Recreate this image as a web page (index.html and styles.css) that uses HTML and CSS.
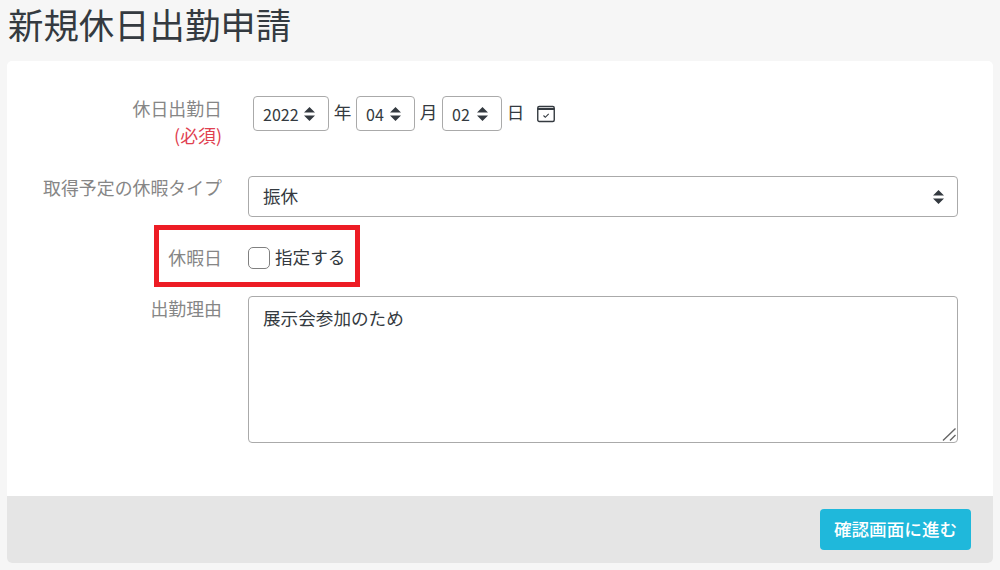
FILE: index.html
```html
<!DOCTYPE html>
<html lang="ja">
<head>
<meta charset="utf-8">
<title>新規休日出勤申請</title>
<link rel="stylesheet" href="styles.css">
</head>
<body>
<h1 class="title">新規休日出勤申請</h1>
<form class="card">
  <div class="card-body">
    <div class="row row-date">
      <label class="label">休日出勤日<br><span class="required">(必須)</span></label>
      <div class="date-fields">
        <select class="mini year"><option>2022</option></select>
        <span class="unit">年</span>
        <select class="mini month"><option>04</option></select>
        <span class="unit">月</span>
        <select class="mini day"><option>02</option></select>
        <span class="unit">日</span>
        <svg class="cal" width="20" height="20" viewBox="0 0 20 20" fill="none" stroke="#343a40">
          <rect x="1.75" y="2.5" width="16.5" height="15" rx="1.5" stroke-width="1.4"/>
          <path d="M1.75 5H18.25" stroke-width="2.2"/>
          <path d="M7.5 11.5l1.8 1.8 3.4-3.4" stroke-width="1.1"/>
        </svg>
      </div>
    </div>
    <div class="row row-type">
      <label class="label">取得予定の休暇タイプ</label>
      <select class="full"><option>振休</option></select>
    </div>
    <div class="row row-check">
      <label class="label">休暇日</label>
      <label class="check"><input type="checkbox" class="box"><span>指定する</span></label>
      <div class="highlight"></div>
    </div>
    <div class="row row-reason">
      <label class="label">出勤理由</label>
      <textarea class="area">展示会参加のため</textarea>
    </div>
  </div>
  <div class="card-foot">
    <button type="button" class="btn">確認画面に進む</button>
  </div>
</form>
</body>
</html>
```
FILE: styles.css
```css
* { box-sizing: border-box; }
html, body { height: 100%; }
body {
  margin: 0;
  padding: 0 7px;
  background: #f6f6f6;
  color: #343a40;
  font-family: "Noto Sans CJK JP", "Noto Sans", sans-serif;
  font-size: 17.6px;
  line-height: 1.5;
  overflow: hidden;
}
.title {
  margin: 0;
  padding: 0 0 0 1px;
  height: 61px;
  font-size: 35.4px;
  font-weight: 400;
  line-height: 48px;
}
.card {
  width: 986px;
  height: 502px;
  background: #fff;
  border-radius: 5px;
  display: flex;
  flex-direction: column;
  overflow: hidden;
}
.card-body { flex: 1; padding-top: 34px; }
.row {
  display: flex;
  align-items: flex-start;
  position: relative;
  padding-right: 35px;
}
.label {
  width: 215px;
  flex: none;
  text-align: right;
  color: #868686;
  font-size: 17.9px;
  line-height: 27px;
  margin-right: 26px;
}
.required { color: #e04050; }
.row-date { height: 81px; }
.date-fields {
  display: flex;
  align-items: flex-start;
  padding: 1px 0 0 5px;
}
select {
  appearance: none;
  background: #fff url("data:image/svg+xml,%3Csvg xmlns='http://www.w3.org/2000/svg' viewBox='0 0 10 14' preserveAspectRatio='none'%3E%3Cpath fill='%23343a40' d='M5 0l5 5.5H0zM5 14L0 8.5h10z'/%3E%3C/svg%3E") no-repeat;
  background-size: 11px 14px;
  border: 1px solid #aaa;
  border-radius: 4px;
  color: #343a40;
  font: inherit;
}
.mini { height: 35px; padding: 0 0 0 9px; font-size: 16px; background-position: right 13px center; }
.year { width: 76px; }
.month { width: 59px; }
.day { width: 60px; }
.unit { width: 27px; text-align: center; line-height: 31px; }
.cal { margin: 8px 0 0 7px; }
.row-type { height: 49px; }
.row-type .label { margin-top: -2px; }
.full {
  width: 710px;
  height: 41px;
  padding: 0 14px;
  background-position: right 13px center;
}
.row-check { height: 71px; align-items: center; padding-bottom: 4px; }
.row-check .label { line-height: 25px; margin-bottom: 3px; }
.check { display: flex; align-items: center; gap: 5px; }
.check span { margin-top: -2px; }
.box {
  appearance: none;
  width: 22px;
  height: 22px;
  margin: 0;
  background: #fff;
  border: 1px solid #808080;
  border-radius: 5px;
}
.highlight {
  position: absolute;
  left: 147px;
  top: 0;
  width: 206px;
  height: 62px;
  border: 5px solid #ed1c24;
  pointer-events: none;
}
.row-reason { height: 147px; }
.row-reason .label { line-height: 25px; }
.area {
  display: block;
  width: 710px;
  height: 147px;
  padding: 8px 14px;
  border: 1px solid #aaa;
  border-radius: 4px;
  color: #343a40;
  font: inherit;
}
.area::-webkit-resizer {
  background: url("data:image/svg+xml,%3Csvg xmlns='http://www.w3.org/2000/svg' width='15' height='15'%3E%3Cpath stroke='%23666' stroke-width='1.4' d='M1 13.5L13.5 1.5M8 13.5l5.5-5.5'/%3E%3C/svg%3E") no-repeat;
}
.card-foot {
  height: 67px;
  flex: none;
  background: #e5e5e5;
  display: flex;
  justify-content: flex-end;
  align-items: flex-start;
  padding: 13px 22px 0 0;
}
.btn {
  width: 151px;
  height: 41px;
  padding: 0;
  border: 0;
  border-radius: 4px;
  background: #1fb8db;
  color: #fff;
  font: inherit;
  font-weight: 500;
}
```
